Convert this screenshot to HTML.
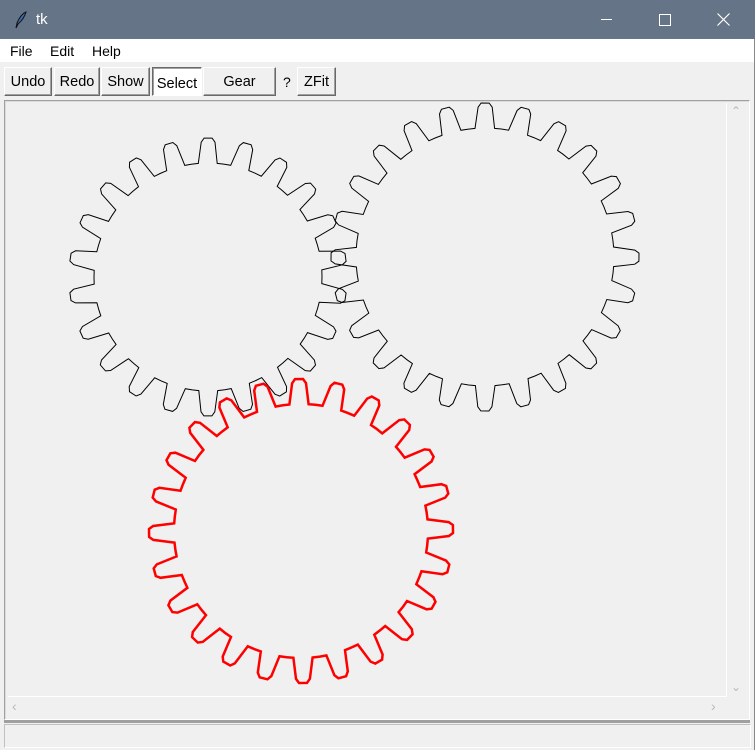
<!DOCTYPE html>
<html><head><meta charset="utf-8"><style>
body{margin:0;width:755px;height:750px;overflow:hidden;background:#f0f0f0;font-family:"Liberation Sans",sans-serif;position:relative}
.tb{position:absolute;left:0;top:0;width:755px;height:39px;background:#657486;color:#fff}
.menu{position:absolute;left:0;top:39px;width:754px;height:23px;background:#fff;font-size:14px}
.menu span{position:absolute;top:4px}
.btn{position:absolute;top:67px;height:29px;box-sizing:border-box;border:1px solid;border-color:#fff #696969 #696969 #fff;box-shadow:inset -1px -1px #a0a0a0;font-size:14.5px;text-align:center;line-height:28px;background:#f0f0f0}
</style></head><body>
<div class="tb">
<svg style="position:absolute;left:14px;top:11px" width="14" height="18"><path d="M12 1 Q7 3 3 12 L2 17 L4 13 Q10 8 12 1Z" fill="#3a6fb0" stroke="#111" stroke-width="1"/></svg>
<span style="position:absolute;left:36px;top:11px;font-size:15px">tk</span>
<div style="position:absolute;left:601px;top:19px;width:11px;height:1px;background:#fff"></div>
<div style="position:absolute;left:659px;top:14px;width:10px;height:10px;border:1px solid #fff"></div>
<svg style="position:absolute;left:717px;top:13px" width="13" height="13"><path d="M0.5 0.5L12.5 12.5M12.5 0.5L0.5 12.5" stroke="#fff" stroke-width="1.2"/></svg>
</div>
<div class="menu"><span style="left:10px">File</span><span style="left:50px">Edit</span><span style="left:92px">Help</span></div>
<div style="position:absolute;left:754px;top:39px;width:1px;height:711px;background:#8a8a8a"></div>
<div class="btn" style="left:4px;width:48px">Undo</div>
<div class="btn" style="left:54px;width:46px">Redo</div>
<div class="btn" style="left:101px;width:49px">Show</div>
<div class="btn" style="left:152px;width:50px;background:#fff;border-color:#696969 #fff #fff #696969;box-shadow:inset 1px 1px #a0a0a0;line-height:32px">Select</div>
<div class="btn" style="left:203px;width:73px">Gear</div>
<span style="position:absolute;left:283px;top:74px;font-size:14px">?</span>
<div class="btn" style="left:297px;width:39px">ZFit</div>
<div style="position:absolute;left:4px;top:100px;width:746px;height:620px;box-sizing:border-box;border:1px solid;border-color:#a0a0a0 #fff #fff #a0a0a0;box-shadow:inset 1px 1px #dcdcdc"></div>
<div style="position:absolute;left:8px;top:103px;width:718px;height:593px;border-right:1px solid #fff;border-bottom:1px solid #fff"></div>
<span style="position:absolute;left:731px;top:104px;color:#b8b8b8;font-size:12px">&#8963;</span>
<span style="position:absolute;left:731px;top:680px;color:#b8b8b8;font-size:12px">&#8964;</span>
<span style="position:absolute;left:12px;top:698px;color:#b8b8b8;font-size:14px">&#8249;</span>
<span style="position:absolute;left:711px;top:698px;color:#b8b8b8;font-size:14px">&#8250;</span>
<div style="position:absolute;left:4px;top:720px;width:746px;height:3px;background:#a0a0a0"></div>
<div style="position:absolute;left:4px;top:724px;width:745px;height:22px;border:1px solid;border-color:#c0c0c0 #fff #fff #c0c0c0"></div>
<svg id="g" style="position:absolute;left:0;top:0" width="755" height="750"></svg>
<script>
function gear(cx,cy,r,N,ph){
 var rr=r-25,p=[],s=2*Math.PI/N;
 for(var i=0;i<N;i++){
  var a=ph+i*s;
  var g=[[0,rr],[0.22,rr],[0.34,r-4],[0.42,r],[0.62,r],[0.7,r-4],[0.8,rr],[1,rr]];
  g.forEach(function(q){var t=a+q[0]*s;p.push((cx+q[1]*Math.cos(t)).toFixed(1)+","+(cy+q[1]*Math.sin(t)).toFixed(1));});
 }
 return "M"+p.join("L")+"Z";
}
var s=document.getElementById('g');
s.innerHTML='<path d="'+gear(208,277,139,22,-1.57-0.52*0.2856)+'" fill="none" stroke="#000" stroke-width="1"/>'+
'<path d="'+gear(485,257,154,24,-1.57-0.52*0.2618)+'" fill="none" stroke="#000" stroke-width="1"/>'+
'<path d="'+gear(301,531,152,24,-1.57-0.15)+'" fill="none" stroke="#f00" stroke-width="2.5"/>';
</script>
</body></html>
